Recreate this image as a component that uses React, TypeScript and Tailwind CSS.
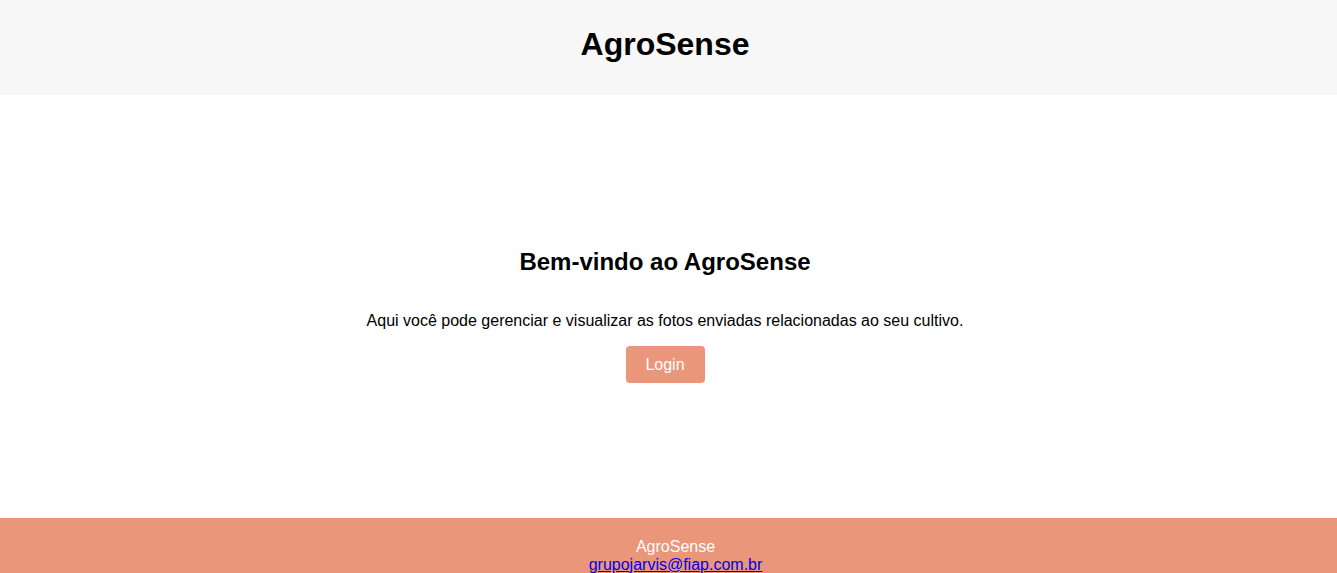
import React from 'react';

export default function App() {
  return (
    <div className="min-h-screen bg-white text-black font-['Liberation_Sans',Arial,sans-serif]">
      <header className="h-[95px] bg-[#f7f7f7] pt-[26px] pr-[7px]">
        <h1 className="text-center text-[32px] font-bold leading-[37px]">AgroSense</h1>
      </header>

      <main className="flex h-[423px] flex-col items-center pt-[153px] pr-[7px]">
        <h2 className="text-[24px] font-bold leading-[28px]">Bem-vindo ao AgroSense</h2>
        <p className="mt-[36px] text-[16px] leading-[18px]">
          Aqui você pode gerenciar e visualizar as fotos enviadas relacionadas ao seu cultivo.
        </p>
        <button className="mt-[16px] h-[37px] w-[79px] rounded-[4px] bg-[#e9967a] text-[16px] text-white">
          Login
        </button>
      </main>

      <footer className="bg-[#e9967a] pt-[20px] pb-[20px] pl-[14px] text-center text-[16px] leading-[18px] text-white">
        <p>AgroSense</p>
        <a href="#" className="text-[#0000ee] underline">
          grupojarvis@fiap.com.br
        </a>
      </footer>
    </div>
  );
}
